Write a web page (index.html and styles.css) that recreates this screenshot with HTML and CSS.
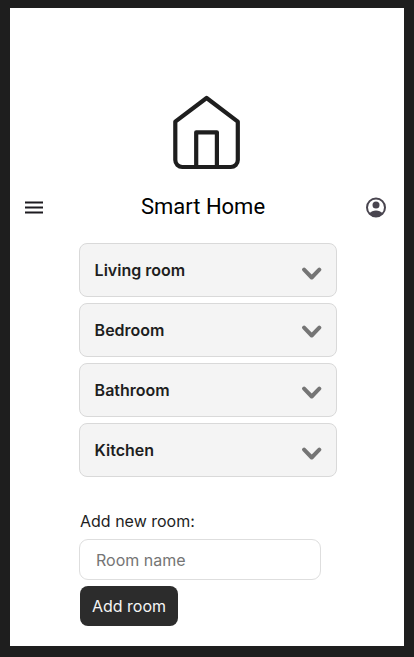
FILE: index.html
```html
<!DOCTYPE html>
<html lang="en">
<head>
<meta charset="utf-8">
<title>Smart Home</title>
<link rel="stylesheet" href="styles.css">
</head>
<body>
<main class="screen">
  <svg class="logo" width="70" height="76" viewBox="0 0 70 76" fill="none" stroke="#1e1e1e" stroke-width="4.200" stroke-linejoin="round" stroke-linecap="round">
    <path d="M3.300 27.700 34.600 4l31.200 23.700V66a7 7 0 0 1-7 7H10.300a7 7 0 0 1-7-7Z"/>
    <path d="M24.200 73V38.300H44.900V73"/>
  </svg>
  <header class="bar">
    <svg class="menu" width="24" height="24" viewBox="0 0 24 24" fill="#1d1b20"><path d="M3 17.500v-2h18v2H3Zm0-5v-2h18v2H3Zm0-5v-2h18v2H3Z"/></svg>
    <h1 class="title">Smart Home</h1>
    <svg class="account" width="24" height="24" viewBox="0 0 24 24">
      <circle cx="12" cy="11.500" r="9" fill="none" stroke="#49454f" stroke-width="2"/>
      <circle cx="12" cy="9" r="3.500" fill="#49454f"/>
      <path fill="#49454f" d="M5.100 17.500C7 15.600 9.400 14.500 12 14.500s5 1.100 6.900 3C17 19.800 14.600 21 12 21s-5-1.200-6.900-3.500Z"/>
    </svg>
  </header>
  <ul class="rooms">
    <li class="room"><span>Living room</span><svg class="chevron" width="20" height="14" viewBox="0 0 20 14"><path d="m2.100 2.600 7.600 7.900 7.600-7.900"/></svg></li>
    <li class="room"><span>Bedroom</span><svg class="chevron chevron-high" width="20" height="14" viewBox="0 0 20 14"><path d="m2.100 2.600 7.600 7.900 7.600-7.900"/></svg></li>
    <li class="room"><span>Bathroom</span><svg class="chevron chevron-mid" width="20" height="14" viewBox="0 0 20 14"><path d="m2.100 2.600 7.600 7.900 7.600-7.900"/></svg></li>
    <li class="room"><span>Kitchen</span><svg class="chevron" width="20" height="14" viewBox="0 0 20 14"><path d="m2.100 2.600 7.600 7.900 7.600-7.900"/></svg></li>
  </ul>
  <form class="add">
    <label class="label" for="room-name">Add new room:</label>
    <input class="field" id="room-name" type="text" placeholder="Room name">
    <button class="button" type="button">Add room</button>
  </form>
</main>
</body>
</html>
```
FILE: styles.css
```css
* { box-sizing: border-box; }
body {
  margin: 0;
  padding: 8px 10px 11px;
  height: 657px;
  background: #1e1e1e;
  font-family: Inter, sans-serif;
  font-size: 16px;
  color: #1e1e1e;
}
.screen {
  height: 638px;
  padding-top: 86px;
  background: #fff;
}
.logo {
  display: block;
  margin-left: 162px;
}
.bar {
  display: grid;
  grid-template-columns: 24px 1fr 24px;
  align-items: start;
  height: 28px;
  margin-top: 22px;
  padding: 0 16px 0 12px;
}
.bar svg { margin-top: 4px; }
.title {
  margin: 1px 0 0;
  padding-right: 4px;
  font: 400 22px/28px Roboto, sans-serif;
  text-align: center;
  white-space: nowrap;
  color: #000;
}
.rooms {
  display: grid;
  gap: 6px;
  width: 258.500px;
  margin: 23px 0 0 68.600px;
  padding: 0;
  list-style: none;
}
.room {
  display: flex;
  justify-content: space-between;
  height: 54px;
  padding: 0 14px 0 15px;
  border: 1px solid #d9d9d9;
  border-radius: 8px;
  background: #f4f4f4;
  font-weight: 600;
  line-height: 53px;
}
.chevron {
  margin-top: 23px;
  fill: none;
  stroke: #757575;
  stroke-width: 4;
  stroke-linecap: round;
  stroke-linejoin: round;
}
.chevron-high { margin-top: 21px; }
.chevron-mid { margin-top: 22px; }
.add {
  display: flex;
  flex-direction: column;
  align-items: flex-start;
  margin: 33px 0 0 70px;
}
.label { line-height: 22px; }
.field {
  width: 242px;
  height: 41px;
  margin: 7px 0 0 -1px;
  padding: 0 16px;
  border: 1px solid #dedede;
  border-radius: 9px;
  background: #fff;
  font: inherit;
}
.field::placeholder { color: #757575; }
.button {
  width: 98px;
  height: 40px;
  margin-top: 6px;
  padding: 0;
  border: 0;
  border-radius: 8px;
  background: #2c2c2c;
  font: inherit;
  color: #f5f5f5;
}
```
